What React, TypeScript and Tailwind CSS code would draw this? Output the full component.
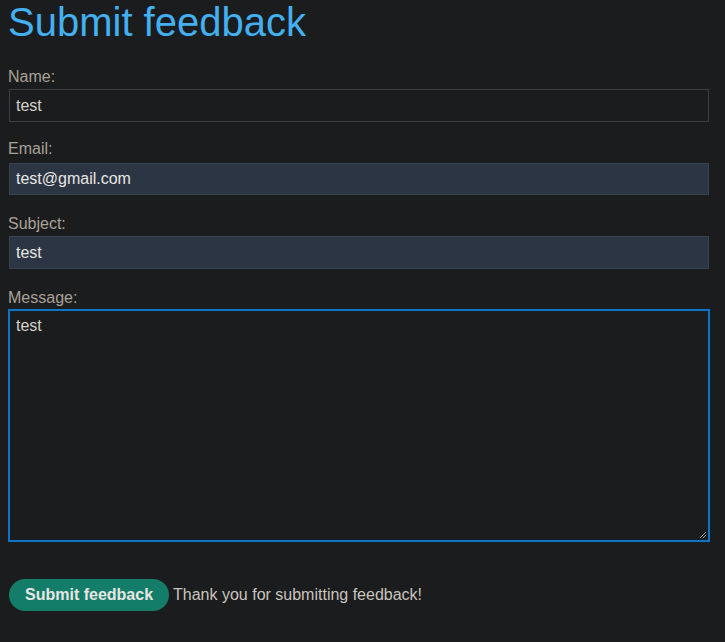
import React from "react";

export default function App() {
  const font = { fontFamily: '"Liberation Sans", Arial, sans-serif' };
  return (
    <div className="min-h-[642px] w-full bg-[#1b1c1e] pl-2" style={font}>
      <h1 className="m-0 text-[40px] leading-[44px] font-normal text-[#43b0f1]">Submit feedback</h1>
      <div className="flex flex-col items-start">
        <label className="mt-[24px] text-[16px] leading-[18px] text-[#a9a296]">Name:</label>
        <div className="ml-px mt-[3px] flex h-[33px] w-[700px] items-center border border-[#3e3f41] bg-[#1b1c1e] px-[6px] text-[16px] text-[#d6d2cc]">test</div>
        <label className="mt-[18px] text-[16px] leading-[18px] text-[#a9a296]">Email:</label>
        <div className="ml-px mt-[5px] flex h-[32px] w-[700px] items-center border border-[#3a4352] bg-[#2c3544] px-[6px] text-[16px] text-[#e8e6e3]">test@gmail.com</div>
        <label className="mt-[20px] text-[16px] leading-[18px] text-[#a9a296]">Subject:</label>
        <div className="ml-px mt-[3px] flex h-[33px] w-[700px] items-center border border-[#3a4352] bg-[#2c3544] px-[6px] text-[16px] text-[#e8e6e3]">test</div>
        <label className="mt-[20px] text-[16px] leading-[18px] text-[#a9a296]">Message:</label>
        <div className="relative mt-[2px] h-[233px] w-[702px] border-2 border-[#0c74c9] bg-[#1b1c1e] px-[6px] pt-[5px] text-[16px] leading-[19px] text-[#d6d2cc]">
          test
          <svg className="absolute bottom-[1px] right-[1px]" width="8" height="8" viewBox="0 0 8 8">
            <path d="M7 1 L1 7 M7 4 L4 7" stroke="#9a9a9a" strokeWidth="1" />
          </svg>
        </div>
        <div className="mt-[37px] ml-px flex items-center">
          <button className="h-[32px] rounded-full bg-[#137d69] px-4 text-[16px] font-bold text-[#e8e6e3]">Submit feedback</button>
          <span className="ml-1 text-[16px] text-[#c9c4bd]">Thank you for submitting feedback!</span>
        </div>
      </div>
    </div>
  );
}
